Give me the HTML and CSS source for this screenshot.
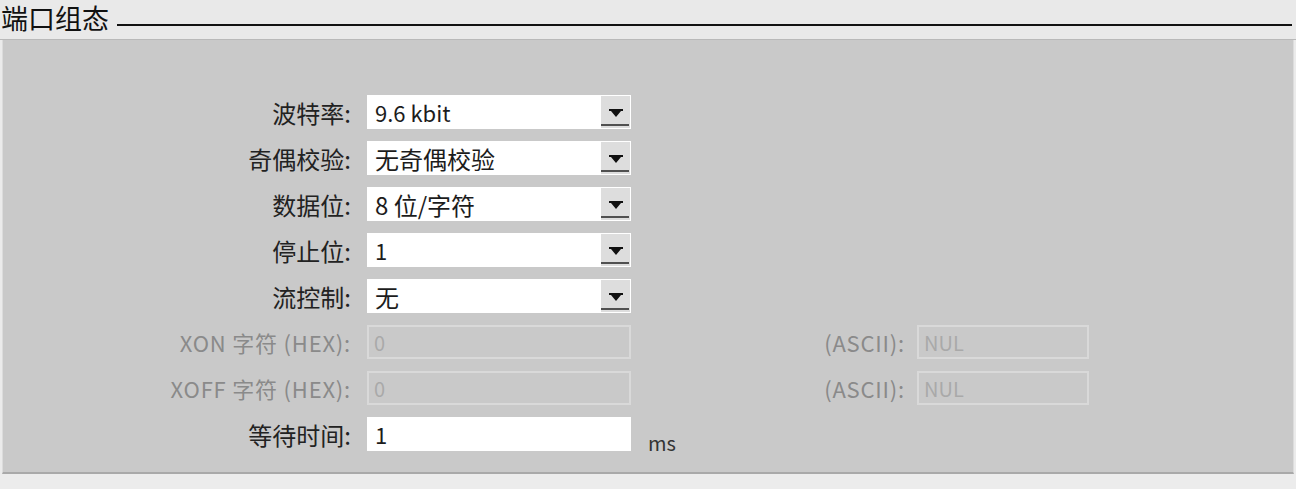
FILE: index.html
```html
<!DOCTYPE html>
<html lang="zh-CN">
<head>
    <meta charset="UTF-8">
    <title>端口组态</title>
    <link rel="stylesheet" href="styles.css">
</head>
<body>
    <!-- Section header -->
    <div class="section-head">
        <span class="section-title">端口组态</span>
        <span class="section-rule"></span>
    </div>

    <!-- Port settings panel -->
    <div class="panel">
        <div class="form-grid">
            <label class="field-label">波特率:</label>
            <div class="select-box"><span class="value latin">9.6 kbit</span><span class="drop-btn"><svg width="14" height="9" viewBox="0 0 14 9"><path d="M0 0H14V2H12L7 8L2 2H0Z" fill="#111"/></svg></span></div>
            <span></span><span></span><span></span>

            <label class="field-label">奇偶校验:</label>
            <div class="select-box"><span class="value">无奇偶校验</span><span class="drop-btn"><svg width="14" height="9" viewBox="0 0 14 9"><path d="M0 0H14V2H12L7 8L2 2H0Z" fill="#111"/></svg></span></div>
            <span></span><span></span><span></span>

            <label class="field-label">数据位:</label>
            <div class="select-box"><span class="value">8 位/字符</span><span class="drop-btn"><svg width="14" height="9" viewBox="0 0 14 9"><path d="M0 0H14V2H12L7 8L2 2H0Z" fill="#111"/></svg></span></div>
            <span></span><span></span><span></span>

            <label class="field-label">停止位:</label>
            <div class="select-box"><span class="value latin">1</span><span class="drop-btn"><svg width="14" height="9" viewBox="0 0 14 9"><path d="M0 0H14V2H12L7 8L2 2H0Z" fill="#111"/></svg></span></div>
            <span></span><span></span><span></span>

            <label class="field-label">流控制:</label>
            <div class="select-box"><span class="value">无</span><span class="drop-btn"><svg width="14" height="9" viewBox="0 0 14 9"><path d="M0 0H14V2H12L7 8L2 2H0Z" fill="#111"/></svg></span></div>
            <span></span><span></span><span></span>

            <label class="field-label disabled">XON 字符 (HEX):</label>
            <div class="text-box disabled"><span class="value">0</span></div>
            <span></span>
            <label class="field-label ascii disabled">(ASCII):</label>
            <div class="text-box disabled"><span class="value">NUL</span></div>

            <label class="field-label disabled">XOFF 字符 (HEX):</label>
            <div class="text-box disabled"><span class="value">0</span></div>
            <span></span>
            <label class="field-label ascii disabled">(ASCII):</label>
            <div class="text-box disabled"><span class="value">NUL</span></div>

            <label class="field-label">等待时间:</label>
            <div class="text-box"><span class="value latin">1</span></div>
            <span class="unit">ms</span>
            <span></span><span></span>
        </div>
    </div>
    <div class="footer-strip"></div>
</body>
</html>
```

FILE: styles.css
```css
body {
    margin: 0;
    padding: 0;
    background-color: #ebebeb;
    font-family: "Noto Sans CJK SC", "Noto Sans", sans-serif;
    color: #1c1c1c;
    width: 1296px;
    height: 489px;
    overflow: hidden;
}
.section-head {
    display: flex;
    align-items: flex-end;
    height: 40px;
    padding-right: 4px;
    background-color: #e9e9e9;
    border-bottom: 1px solid #b9b9b9;
    box-sizing: border-box;
}
.section-title {
    font-size: 27px;
    line-height: 32px;
    margin-bottom: 5px;
    padding-left: 1px;
    color: #111;
}
.section-title + .section-rule {
    flex: 1;
    margin-left: 8px;
    margin-bottom: 13px;
    border-bottom: 2px solid #111;
}
.panel {
    height: 434px;
    margin: 0 2px 0 2px;
    background-color: #c9c9c9;
    border-left: 1px solid #dcdcdc;
    border-right: 1px solid #dcdcdc;
    border-bottom: 2px solid #a9a9a9;
    box-sizing: border-box;
    padding-top: 55px;
}
.form-grid {
    display: grid;
    grid-template-columns: 364px 264px 70px 216px 172px;
    grid-auto-rows: 34px;
    row-gap: 12px;
}
.field-label {
    display: flex;
    align-items: center;
    justify-content: flex-end;
    padding-right: 16px;
    font-size: 24px;
    white-space: nowrap;
    color: #222;
}
.field-label.ascii {
    padding-right: 12px;
}
.field-label.disabled {
    color: #8a8a8a;
    font-size: 22px;
    letter-spacing: 0.8px;
}
.select-box,
.text-box {
    display: flex;
    align-items: center;
    background-color: #fff;
    box-sizing: border-box;
    padding: 1px;
}
.value {
    flex: 1;
    padding-left: 7px;
    font-size: 24px;
    white-space: nowrap;
}
.value.latin {
    font-size: 22px;
}
.text-box.disabled {
    background-color: #c9c9c9;
    border: 2px solid #d9d9d9;
    padding: 0;
}
.text-box.disabled .value {
    color: #a9a9a9;
    font-size: 20px;
    padding-left: 5px;
}
.drop-btn {
    width: 29px;
    height: 32px;
    background-color: #dddddd;
    display: flex;
    align-items: center;
    justify-content: center;
    position: relative;
}
.drop-btn svg {
    margin-top: 2px;
}
.drop-btn::after {
    content: "";
    position: absolute;
    left: 0;
    right: 1px;
    bottom: 2px;
    border-bottom: 2px solid #505050;
}
.unit {
    display: flex;
    align-items: flex-end;
    padding-left: 17px;
    font-size: 20px;
    color: #333;
    line-height: 1;
    margin-bottom: -2px;
}
.footer-strip {
    height: 15px;
    background-color: #ececec;
}
```
